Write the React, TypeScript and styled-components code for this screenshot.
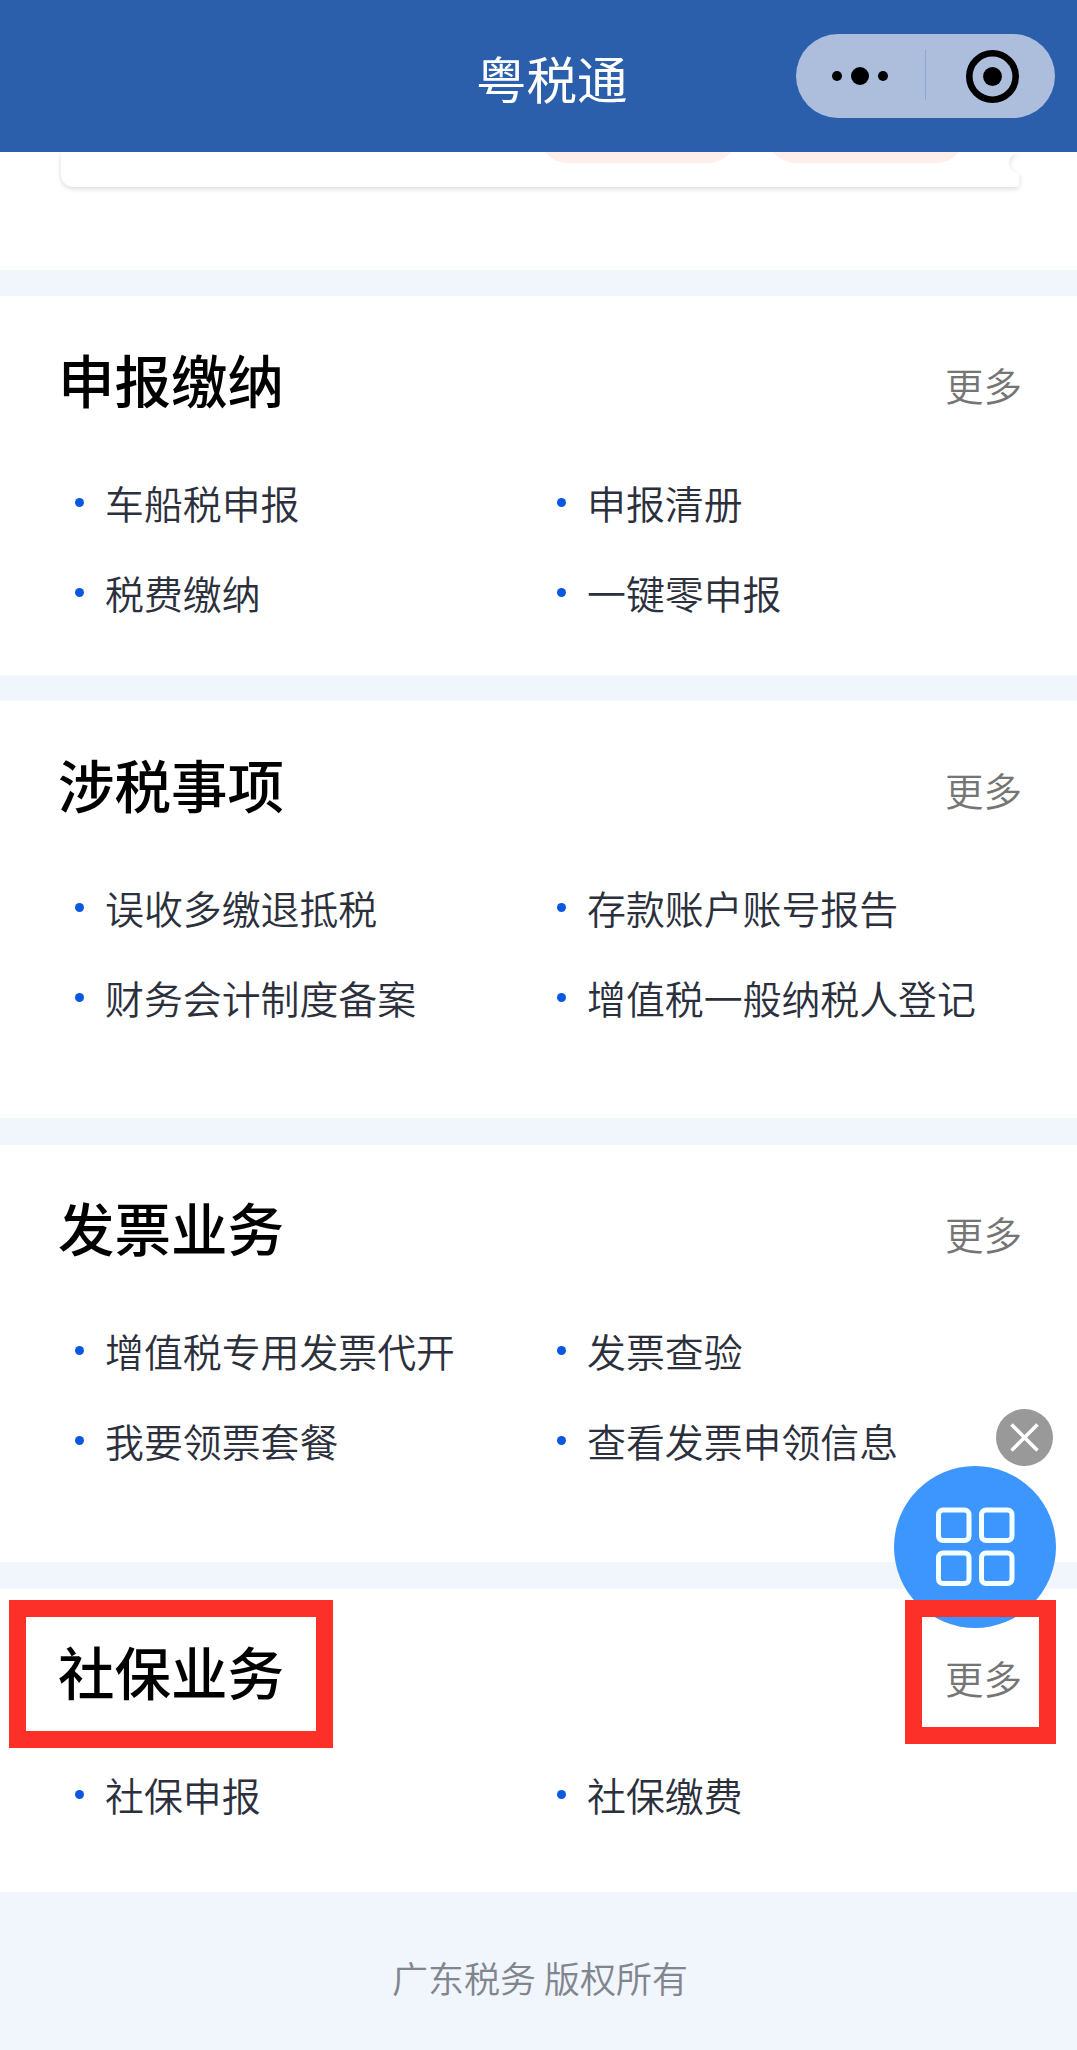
import React from "react";
import styled, { createGlobalStyle } from "styled-components";

const GlobalStyle = createGlobalStyle`
  * { box-sizing: border-box; }
  body {
    margin: 0;
    background: #f1f5fc;
    font-family: "Noto Sans CJK SC", "Noto Sans", sans-serif;
  }
`;

const Page = styled.div`
  position: relative;
  width: 1077px;
  height: 2050px;
  overflow: hidden;
  display: flex;
  flex-direction: column;
  background: #f1f5fc;
`;

const Header = styled.header`
  flex: none;
  height: 152px;
  padding: 34px 22px 34px 281px;
  display: grid;
  grid-template-columns: 1fr 259px;
  align-items: center;
  background: #2b5eab;
`;

const AppTitle = styled.h1`
  margin: 1px 0 0;
  padding-left: 195px;
  font-size: 50.5px;
  font-weight: 400;
  line-height: 60px;
  color: #fff;
`;

const Capsule = styled.div`
  height: 84px;
  border-radius: 42px;
  background: #adbedd;
  display: flex;
`;

const CapsuleIcon = styled.svg`
  display: block;
  width: 259px;
  height: 84px;
`;

const Banner = styled.section`
  flex: none;
  height: 117.5px;
  padding: 0 58px 0 61px;
  overflow: hidden;
  background: #fff;
`;

const TicketShadow = styled.div`
  filter: drop-shadow(0 2px 2.5px rgba(0, 0, 0, 0.14));
`;

const Ticket = styled.div`
  height: 34.5px;
  padding: 0 54px 0 478px;
  display: flex;
  gap: 30px;
  border-radius: 0 0 3px 12px;
  background: #fff;
  mask-image: radial-gradient(circle at 100% 11px, transparent 9.5px, #000 10.5px);
`;

const TicketButton = styled.div`
  flex: 1;
  height: 58px;
  margin-top: -47px;
  border-radius: 29px;
  background: #feeeec;
`;

const Section = styled.section<{ $height: number }>`
  flex: none;
  height: ${(p) => p.$height}px;
  margin-top: 26.5px;
  padding: 50px 55px 0 58px;
  background: #fff;
`;

const SectionHead = styled.div`
  height: 71px;
  display: flex;
  justify-content: space-between;
  align-items: center;
`;

const SectionTitle = styled.h2`
  margin: 0;
  padding-bottom: 8px;
  font-size: 56.5px;
  font-weight: 500;
  line-height: 70px;
  color: #000;
`;

const More = styled.span`
  padding-top: 5px;
  font-size: 38.5px;
  font-weight: 350;
  line-height: 50px;
  color: #757575;
`;

const Items = styled.ul`
  margin: 42px 0 0;
  padding: 0 0 0 17px;
  list-style: none;
  display: grid;
  grid-template-columns: 482px 1fr;
  grid-auto-rows: 90px;
`;

const Item = styled.li`
  height: 85px;
  display: flex;
  align-items: center;
  white-space: nowrap;
  font-size: 38.9px;
  font-weight: 350;
  line-height: 50px;
  color: #2c303d;

  &::before {
    content: "";
    flex: none;
    width: 9px;
    height: 9px;
    margin: 1px 21px 0 0;
    border-radius: 50%;
    background: #0b58e0;
  }
`;

const Footer = styled.footer`
  flex: 1;
  padding: 60px 0 0 3px;
  text-align: center;
  font-size: 36px;
  font-weight: 350;
  line-height: 50px;
  color: #80858e;
`;

const CloseButton = styled.svg`
  position: absolute;
  left: 996px;
  top: 1409px;
  width: 57px;
  height: 57px;
`;

const MenuButton = styled.svg`
  position: absolute;
  left: 894px;
  top: 1466px;
  width: 162px;
  height: 162px;
`;

const Highlight = styled.div<{ $left: number; $width: number; $height: number }>`
  position: absolute;
  top: 1600px;
  left: ${(p) => p.$left}px;
  width: ${(p) => p.$width}px;
  height: ${(p) => p.$height}px;
  border: 17px solid #fd3029;
`;

const sections = [
  { title: "申报缴纳", height: 378.5, items: ["车船税申报", "申报清册", "税费缴纳", "一键零申报"] },
  { title: "涉税事项", height: 417, items: ["误收多缴退抵税", "存款账户账号报告", "财务会计制度备案", "增值税一般纳税人登记"] },
  { title: "发票业务", height: 417.5, items: ["增值税专用发票代开", "发票查验", "我要领票套餐", "查看发票申领信息"] },
  { title: "社保业务", height: 303.5, items: ["社保申报", "社保缴费"] },
];

const tiles = [
  [44.5, 44],
  [87.5, 44],
  [44.5, 87],
  [87.5, 87],
];

export default function App() {
  return (
    <Page>
      <GlobalStyle />
      <Header>
        <AppTitle>粤税通</AppTitle>
        <Capsule>
          <CapsuleIcon viewBox="0 0 259 84">
            <circle cx="41" cy="42" r="5" />
            <circle cx="64" cy="42" r="9" />
            <circle cx="87" cy="42" r="5" />
            <path d="M129.5 15.5V66" stroke="#8fa6cd" strokeWidth="1" />
            <circle cx="196.5" cy="42.5" r="23.2" fill="none" stroke="#000" strokeWidth="6.6" />
            <circle cx="196.5" cy="42.5" r="9.4" />
          </CapsuleIcon>
        </Capsule>
      </Header>
      <Banner>
        <TicketShadow>
          <Ticket>
            <TicketButton />
            <TicketButton />
          </Ticket>
        </TicketShadow>
      </Banner>
      {sections.map((s) => (
        <Section key={s.title} $height={s.height}>
          <SectionHead>
            <SectionTitle>{s.title}</SectionTitle>
            <More>更多</More>
          </SectionHead>
          <Items>
            {s.items.map((item) => (
              <Item key={item}>{item}</Item>
            ))}
          </Items>
        </Section>
      ))}
      <Footer>广东税务 版权所有</Footer>
      <CloseButton viewBox="0 0 57 57">
        <circle cx="28.5" cy="28.5" r="28.5" fill="#999" />
        <path d="M15.5 15.5L41.5 41.5M41.5 15.5L15.5 41.5" stroke="#fff" strokeWidth="3.6" />
      </CloseButton>
      <MenuButton viewBox="0 0 162 162">
        <circle cx="81" cy="81" r="81" fill="#3c96fe" />
        {tiles.map(([x, y]) => (
          <rect key={`${x}-${y}`} x={x} y={y} width="30.5" height="30.5" rx="4.5" fill="none" stroke="#f4ffff" strokeWidth="5" />
        ))}
      </MenuButton>
      <Highlight $left={9} $width={324} $height={148} />
      <Highlight $left={905} $width={151} $height={144} />
    </Page>
  );
}
